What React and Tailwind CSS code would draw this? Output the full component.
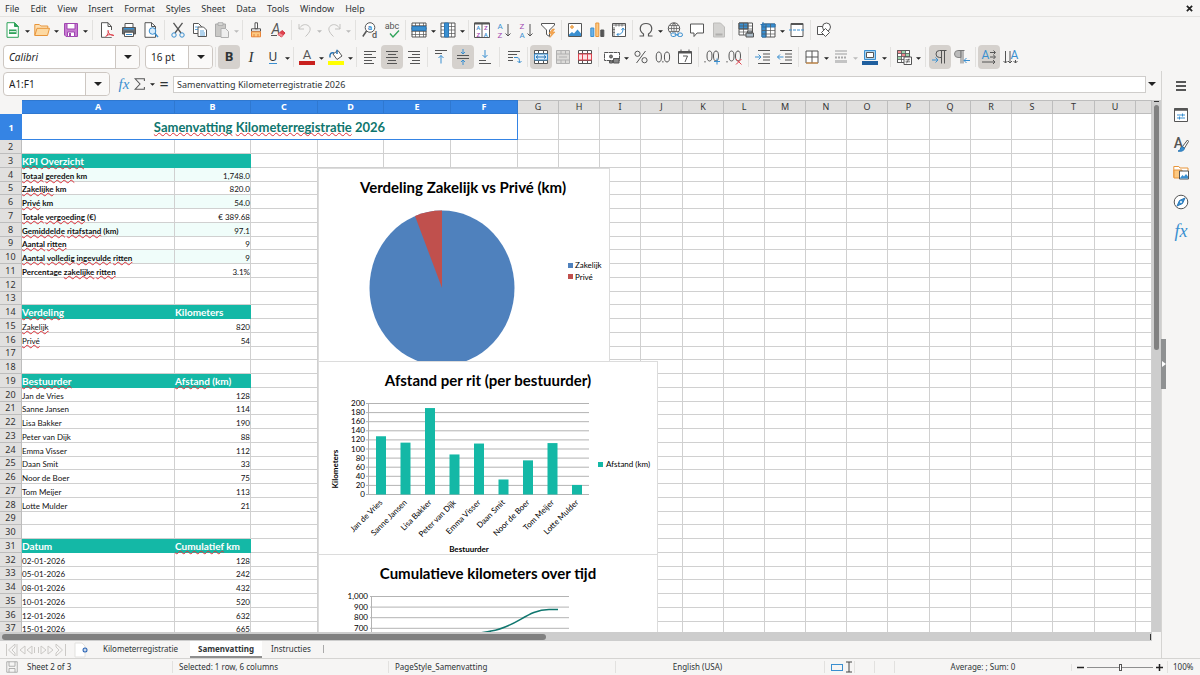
import { useState } from "react";

const INK = "#555555";
const BLUE = "#3a8fd0";
const TEAL = "#14b8a6";

const Svg = ({ children, size = "size-4", className = "" }) => (
    <svg viewBox="0 0 16 16" className={`${size} shrink-0 overflow-visible ${className}`} fill="none" stroke={INK} strokeWidth="1" aria-hidden="true">
        {children}
    </svg>
);

const Glyph = ({ x, y, size, color = INK, weight = "400", style = "normal", children }) => (
    <text x={x} y={y} fontSize={size} fill={color} stroke="none" fontWeight={weight} fontStyle={style} textAnchor="middle" fontFamily="Roboto, sans-serif">
        {children}
    </text>
);

const tableLines = "M.5 3.5h15M.5 6.5h15M.5 9.5h15M.5 12.5h15M4.5 1v14M8.5 1v14M12.5 1v14";

const icons = {
    newSheet: (
        <Svg>
            <path d="M2 .7h7.500L13.300 4.500v10.800H2z" fill="#fff" stroke="#2fa35a" />
            <path d="M9.500.7v3.800h3.800z" fill="#2fa35a" stroke="#2fa35a" />
            <path d="M4 7.500h7.500v4.500H4z" fill="#2fa35a" stroke="none" />
            <path d="M4.500 9.700h6.500" stroke="#fff" />
        </Svg>
    ),
    open: (
        <Svg>
            <path d="M.8 13.300V2.500h4.500l1.500 1.500h7v2" fill="#fde0b4" stroke="#e8953a" />
            <path d="M.8 13.500 3 6.300h12.500l-2 7.200z" fill="#fdd9a2" stroke="#e8953a" />
        </Svg>
    ),
    save: (
        <Svg>
            <path d="M1.500 1.500h13v13H3L1.500 13z" fill="#c67ad0" stroke="#a046b0" />
            <path d="M4 1.500h8v5.500H4z" fill="#fff" stroke="#a046b0" />
            <path d="M4.500 10h7v4.500h-7z" fill="#fff" stroke="#a046b0" />
            <path d="M6 11h2v3H6z" fill="#a046b0" stroke="none" />
        </Svg>
    ),
    pdf: (
        <Svg>
            <path d="M2.500.7H9l3.500 3.800v10.800h-10z" fill="#fff" />
            <path d="M9 .7v3.800h3.500" />
            <path d="M8 8h5v7H6z" fill="#f6f5f4" stroke="none" />
            <path d="M9 8c1 3-.5 5-2.500 7M9 9.500c.8 2.500 3 4 6 4M7.500 13.500c2.500-1.200 5-1 7-.3" stroke="#e0434f" />
        </Svg>
    ),
    print: (
        <Svg>
            <path d="M4 1.500h8v4H4zM3.500 10h9v4.500h-9z" fill="#fff" />
            <path d="M1.500 5.500h13V12h-2v-2h-9v2h-2z" fill="#6a7074" />
            <path d="M3 6h10v1.500H3z" fill={BLUE} stroke="none" />
            <path d="M5 12.500h6" stroke={BLUE} />
        </Svg>
    ),
    preview: (
        <Svg>
            <path d="M2 .7h6.500L12.500 4.500v10.800H2z" fill="#fff" />
            <path d="M8.500.7v3.800h4" />
            <circle cx="9.500" cy="9" r="3.300" fill="#d9ecfb" stroke={BLUE} />
            <path d="m12 11.500 3 3.500" stroke={BLUE} strokeWidth="1.500" />
        </Svg>
    ),
    cut: (
        <Svg>
            <path d="M3.500.8 11 11M12.500.8 5 11" strokeWidth="1.300" />
            <circle cx="4" cy="13" r="2.200" stroke={BLUE} />
            <circle cx="12" cy="13" r="2.200" stroke={BLUE} />
        </Svg>
    ),
    copy: (
        <Svg>
            <path d="M1.500 1.500h5l3 3v7h-8z" fill="#fff" />
            <path d="M6 5h5.500l3 3v6.500H6z" fill="#fff" />
            <path d="M3 5h3M3 7.500h3M8 9h4M8 11h5M8 13h5" stroke={BLUE} strokeWidth=".8" />
        </Svg>
    ),
    paste: (
        <Svg>
            <path d="M1.500 2h10v12.500h-10z" fill="#c9c8c6" stroke="#aaa" />
            <path d="M4 .8h5v2.500H4z" fill="#e2e1df" stroke="#aaa" />
            <path d="M7 6.500h4.500l3 3v6H7z" fill="#eee" stroke="#b0b0b0" />
        </Svg>
    ),
    clone: (
        <Svg>
            <path d="M7 .8h2.500v6H7zM3.500 6.800h9v2.500h-9z" fill="#fff" />
            <path d="M3.500 9.800h9v5h-9z" fill="#fdc982" stroke="#e8853a" />
            <path d="M6 12v3M10 12v3" stroke="#e8853a" />
        </Svg>
    ),
    clearFormat: (
        <Svg>
            <Glyph x={6} y={12} size={14} style="italic">A</Glyph>
            <path d="M1 13.500h6" />
            <path d="m8 12.500 4-4 3 2.500-3.500 4z" fill="#e0434f" stroke="#d0303c" />
            <path d="m8 12.500 1.500-1.500 3.500 2-1.500 2z" fill="#f08a92" stroke="none" />
        </Svg>
    ),
    undo: (
        <Svg>
            <path d="M2 2v5h5M2 7c2-4 6-5.500 9-3.500 4 2.500 2 7-2.500 11" stroke="#c4c3c1" />
        </Svg>
    ),
    redo: (
        <Svg>
            <path d="M14 2v5H9M14 7C12 3 8 1.500 5 3.500 1 6 3 10.500 7.500 14.500" stroke="#c4c3c1" />
        </Svg>
    ),
    find: (
        <Svg>
            <circle cx="8" cy="5.500" r="4.800" fill="#fff" />
            <path d="M4.500 9 .8 14.500" strokeWidth="1.500" />
            <Glyph x={8} y={8} size={8} color={BLUE} weight="700">a</Glyph>
            <Glyph x={12.500} y={15.500} size={9} weight="500">d</Glyph>
        </Svg>
    ),
    spelling: (
        <Svg>
            <Glyph x={8} y={7} size={9}>abc</Glyph>
            <path d="m6 11.500 3 3.500 6-6.500" stroke="#2fa35a" strokeWidth="1.300" />
        </Svg>
    ),
    rows: (
        <Svg>
            <path d="M1 1h14v14H1z" fill="#fff" />
            <path d={tableLines} strokeWidth=".7" />
            <path d="M1 4.500h14v4H1z" fill={BLUE} stroke="#2a76b5" />
        </Svg>
    ),
    columns: (
        <Svg>
            <path d="M1 1h14v14H1z" fill="#fff" />
            <path d="M1 4.500h14M1 8h14M1 11.500h14M4.500 1v14M8 1v14M11.500 1v14" strokeWidth=".7" />
            <path d="M4.500 1h4v14h-4z" fill={BLUE} stroke="#2a76b5" />
        </Svg>
    ),
    sort: (
        <Svg>
            <path d="M.5 1h15v14.500H.5zM8 1v14.500" fill="#fff" />
            <path d="M.5 1.500h15" strokeWidth="2" />
            <Glyph x={4.300} y={8} size={6} color={BLUE} weight="500">A</Glyph>
            <Glyph x={4.300} y={15} size={6} color="#a046b0" weight="500">Z</Glyph>
            <Glyph x={11.800} y={8} size={6} color="#a046b0" weight="500">Z</Glyph>
            <Glyph x={11.800} y={15} size={6} color={BLUE} weight="500">A</Glyph>
        </Svg>
    ),
    sortAsc: (
        <Svg>
            <Glyph x={4} y={6.500} size={8} color={BLUE}>A</Glyph>
            <Glyph x={4} y={16} size={8} color="#a046b0">Z</Glyph>
            <path d="M12 2v12M9.500 11.500 12 14l2.500-2.500" />
        </Svg>
    ),
    sortDesc: (
        <Svg>
            <Glyph x={4} y={6.500} size={8} color="#a046b0">Z</Glyph>
            <Glyph x={4} y={16} size={8} color={BLUE}>A</Glyph>
            <path d="M12 2v12M9.500 11.500 12 14l2.500-2.500" />
        </Svg>
    ),
    filter: (
        <Svg>
            <path d="M1.500 1.500h13V3L9.500 8v6.500l-3-2V8l-5-5z" fill="#fff" />
            <path d="M12.500 7 9 11.500h2.500L10 15.500l5-5.500h-2.500L14.500 7z" fill="#f6a552" stroke="#e8953a" strokeWidth=".6" />
        </Svg>
    ),
    image: (
        <Svg>
            <path d="M1.500 1.500h13v13h-13z" fill="#fff" />
            <circle cx="5" cy="5" r="1.300" fill="#fdc982" stroke="#e8953a" />
            <path d="M2 12.500 5 10l2 1.500L10.500 7.500l3.500 4V14H2z" fill={BLUE} stroke="none" />
        </Svg>
    ),
    chart: (
        <Svg>
            <path d="M1.800 6h3v8.500h-3z" fill="#6ab2e8" stroke={BLUE} />
            <path d="M6.800 1h3v13.500h-3z" fill="#fdc982" stroke="#e8953a" />
            <path d="M11.800 8h3v6.500h-3z" fill="#555" />
        </Svg>
    ),
    pivot: (
        <Svg>
            <path d="M1.500 1.500h13v13h-13z" fill="#fff" />
            <path d="M2 3h12M3 5v9M5 2v2.500M8 2v2.500M11 2v2.500M2 7.500h2M2 10.500h2" stroke="#777" />
            <path d="M6 12.500c4.500 0 6-2 6-6M10.500 8 12 6l1.500 2M7.500 11 6 12.500 7.500 14" stroke={BLUE} />
        </Svg>
    ),
    symbol: (
        <Svg>
            <path d="M1.500 14h4v-2C0 8 2 1.500 8 1.500S16 8 10.500 12v2h4" strokeWidth="1.200" />
        </Svg>
    ),
    link: (
        <Svg>
            <circle cx="7" cy="6.500" r="5.700" />
            <path d="M1.500 6.500h11M7 1v11M2.500 3.500h9M2.500 9.500h9M7 1C3.500 4 3.500 9 7 12M7 1c3.500 3 3.500 8 0 11" strokeWidth=".7" />
            <path d="M4 10.500h12V15H4z" fill="#f6f5f4" stroke="none" />
            <rect x="4" y="11" width="5" height="3.500" rx="1.700" stroke={BLUE} />
            <rect x="10.500" y="11" width="5" height="3.500" rx="1.700" stroke={BLUE} />
            <path d="M7.500 12.800h4.500" stroke={BLUE} />
        </Svg>
    ),
    comment: (
        <Svg>
            <path d="M1.500 2h13v9H8l-3 3.500V11H1.500z" fill="#fff" />
        </Svg>
    ),
    header: (
        <Svg>
            <path d="M2.500 1h7l4 4v10h-11z" fill="#d4d3d1" stroke="#bdbcba" />
            <path d="M4.500 11.500h7v2h-7z" fill="#b0afad" stroke="none" />
        </Svg>
    ),
    printArea: (
        <Svg>
            <path d="M1 1h13.500v12H1z" fill="#fff" />
            <path d="M1 1h9v6H1z" fill={BLUE} />
            <path d="M1 4h13.500M1 7h13.500M1 10h13.500M5.500 1v12M10 1v12" strokeWidth=".7" />
            <path d="M8 11h7.500v4H8zM9.500 9h4.500v2H9.500z" fill="#a9bac6" />
        </Svg>
    ),
    freeze: (
        <Svg>
            <path d="M2 2h13v13H2z" fill="#fff" />
            <path d="M2 2h13v3H2zM2 5h4v10H2z" fill={BLUE} stroke="#2a76b5" />
            <path d="M2 8.500h13M2 12h13M6 2v13M10.500 2v13" strokeWidth=".7" />
            <path d="M3 0v5M.5 2.500h5" stroke="#2a76b5" />
        </Svg>
    ),
    split: (
        <Svg>
            <path d="M2 1.500h12v13H2z" fill="#fff" />
            <path d="M2 2h12" strokeWidth="2" />
            <path d="M0 8h16" stroke={BLUE} strokeDasharray="3 1" />
        </Svg>
    ),
    shapes: (
        <Svg>
            <path d="M1.500 4.500h8v8h-8z" fill="#fff" />
            <circle cx="10.500" cy="5" r="4" fill="#fff" />
            <path d="m9.500 6.500 4 4-4 4-4-4z" fill="#fff" />
        </Svg>
    ),
    fontColor: (
        <Svg>
            <Glyph x={8} y={10} size={13}>A</Glyph>
            <path d="M0 12h16v4H0z" fill="#c9211e" stroke="none" />
        </Svg>
    ),
    highlight: (
        <Svg>
            <path d="m5 5 5-3.500 4 5.500-5 3.500z" fill="#fff" />
            <path d="M9 5V.8M2 8.500C1.500 5 3 3 6 4" stroke="#2a76b5" strokeWidth="1.500" />
            <path d="M0 12h16v4H0z" fill="#ff0" stroke="none" />
        </Svg>
    ),
    left: <Svg><path d="M2 2.500h12M2 5.500h8M2 8.500h12M2 11.500h8M2 14.500h10" /></Svg>,
    center: <Svg><path d="M2 2.500h12M4 5.500h8M2 8.500h12M4 11.500h8M3 14.500h10" /></Svg>,
    right: <Svg><path d="M2 2.500h12M6 5.500h8M2 8.500h12M6 11.500h8M4 14.500h10" /></Svg>,
    top: (
        <Svg>
            <path d="M2 1.500h12M2 4.500h7" />
            <path d="M8 14.500V6.500M5.500 9 8 6.500 10.500 9" stroke={BLUE} />
        </Svg>
    ),
    middle: (
        <Svg>
            <path d="M2 6.500h12M2 9.500h12" />
            <path d="M8 0v5M6 3l2 2 2-2M8 16v-5M6 13l2-2 2 2" stroke={BLUE} />
        </Svg>
    ),
    bottom: (
        <Svg>
            <path d="M2 11.500h7M2 14.500h12" />
            <path d="M8 1v7.500M5.500 6 8 8.500 10.500 6" stroke={BLUE} />
        </Svg>
    ),
    wrap: (
        <Svg>
            <path d="M2 2.500h12M2 5.500h9M2 8.500h5M2 11.500h5" />
            <path d="M8 8.500h3c2 0 2.500 1.500 2.500 5M11.500 12l2 2 2-2" stroke={BLUE} />
        </Svg>
    ),
    merge: (
        <Svg>
            <path d="M1.500 1.500h13v13h-13z" fill="#fff" />
            <path d="M1.500 4.500h13M1.500 11.500h13M5.500 1.500v13M10.500 1.500v13" />
            <path d="M1.500 5h13v6h-13z" fill="#d9ecfb" stroke={BLUE} />
            <path d="M3 8h10M5 6.500 3 8l2 1.500M11 6.500 13 8l-2 1.500" stroke="#2a76b5" />
        </Svg>
    ),
    unmerge: (
        <Svg>
            <path d="M1.500 1.500h13v13h-13z" fill="#dcdbd9" stroke="#b0b0b0" />
            <path d="M1.500 5h13M1.500 11h13M6 1.500V5M10.500 1.500V5M6 11v3.500M10.500 11v3.500M4 8h8" stroke="#b0b0b0" />
        </Svg>
    ),
    splitCells: (
        <Svg>
            <path d="M1.500 1.500h13v13h-13z" fill="#fff" />
            <path d="M1.500 4.500h13M1.500 11.500h13M5.500 1.500v13M10.500 1.500v13" />
            <path d="M1.500 5h13v6h-13zM5.500 5v6M10.500 5v6" fill="#fbe3e4" stroke="#e0434f" />
        </Svg>
    ),
    currency: (
        <Svg>
            <path d="M.5 3.500h15v8H.5z" fill="#fff" strokeDasharray="4 .5" />
            <circle cx="7" cy="7.500" r="1.500" fill="#777" />
            <path d="M9.500 9.500h5.500V14H9.500zM5.500 12h3v2h-3z" fill="#888" />
        </Svg>
    ),
    percent: (
        <Svg>
            <circle cx="4.500" cy="4.800" r="2.600" />
            <circle cx="11.500" cy="11.200" r="2.600" />
            <path d="m12.500 2-9 12" />
        </Svg>
    ),
    number: (
        <Svg>
            <ellipse cx="3.800" cy="8" rx="2.600" ry="5" />
            <ellipse cx="12" cy="8" rx="2.600" ry="5" />
            <path d="M7.900 12v1.500" />
        </Svg>
    ),
    date: (
        <Svg>
            <path d="M1.500 2.500h13v12h-13z" fill="#fff" />
            <path d="M1.500 3.500h13" strokeWidth="2" />
            <path d="M4 .5v3M12 .5v3M6 7h4.500L8 13" />
        </Svg>
    ),
    addDecimal: (
        <Svg>
            <path d="M1 12v1.500" />
            <ellipse cx="5.500" cy="7" rx="2.500" ry="5" />
            <ellipse cx="12" cy="7" rx="2.500" ry="5" />
            <path d="M10 12.500h6M13 9.500v6" stroke={BLUE} />
        </Svg>
    ),
    deleteDecimal: (
        <Svg>
            <path d="M1 12v1.500" />
            <ellipse cx="5.500" cy="7" rx="2.500" ry="5" />
            <ellipse cx="12" cy="7" rx="2.500" ry="5" />
            <path d="m10 10 5.500 5.500M15.500 10 10 15.500" stroke="#e0434f" />
        </Svg>
    ),
    indent: (
        <Svg>
            <path d="M3 1.500h12M8 5h7M8 8h7M8 11h7M3 14.500h12" />
            <path d="M0 8h6M3.500 5.500 6 8l-2.500 2.500" stroke={BLUE} />
        </Svg>
    ),
    outdent: (
        <Svg>
            <path d="M3 1.500h12M8 5h7M8 8h7M8 11h7M3 14.500h12" />
            <path d="M.5 8h6M3 5.500.5 8 3 10.500" stroke={BLUE} />
        </Svg>
    ),
    borders: (
        <Svg>
            <path d="M2 2h12v12H2zM8 2v12M2 8h12" fill="#fff" />
            <path d="M2 14h12" stroke="#e8953a" />
        </Svg>
    ),
    borderStyle: (
        <Svg>
            <path d="M2 2h12M2 5h12" stroke="#bbb" strokeWidth="1.500" />
            <path d="M2 8.500h12" stroke="#aaa" strokeWidth="2" strokeDasharray="2 1" />
            <path d="M2 12.500h12" stroke="#c4c4c4" strokeWidth="3" />
        </Svg>
    ),
    borderColor: (
        <Svg>
            <path d="M2.500 1.500h11v9h-11z" fill="#a8d2f0" stroke={BLUE} />
            <path d="M4.500 3.500h7v5h-7z" fill="#fff" />
            <path d="M0 12h16v4H0z" fill="#1f5f9e" stroke="none" />
        </Svg>
    ),
    conditional: (
        <Svg>
            <path d="M1.500 1.500h12v12h-12z" fill="#fff" />
            <path d="M1.500 1.500h4v3h-4zM5.500 4.500h4v3h-4z" fill="#ee8a90" stroke="none" />
            <path d="M5.500 1.500h4v3h-4zM9.500 4.500h4v3h-4zM1.500 7.500h4v3h-4z" fill="#9ed6af" stroke="none" />
            <path d="M1.500 1.500h12v12h-12zM1.500 4.500h12M1.500 7.500h12M1.500 10.500h12M5.500 1.500v12M9.500 1.500v12" strokeWidth=".8" />
            <path d="M8 8h7.500v7.500H8z" fill="#fff" />
            <path d="M9.500 10.800h4.500M9.500 12.800h4.500M13 9.500l-2.500 4.800" strokeWidth=".8" />
        </Svg>
    ),
    ltr: (
        <Svg>
            <path d="M14.500 1.500h-7a3.500 3.500 0 0 0 0 7h1.500M9.500 1.500v13M12.500 1.500v13" />
            <path d="M0 11h6M3.500 8.500 6 11l-2.500 2.500" stroke={BLUE} />
        </Svg>
    ),
    rtl: (
        <Svg>
            <path d="M7 1.500H4a3 3 0 0 0 0 7h3z" fill="#bbb" stroke="#888" />
            <path d="M10.500 1.500h-6M7 1.500v13M9 1.500v13" stroke="#777" />
            <path d="M10 11.500h6M12.500 9 10 11.500l2.500 2.500" stroke={BLUE} />
        </Svg>
    ),
    textHorizontal: (
        <Svg>
            <Glyph x={4.500} y={9.500} size={12} color={BLUE}>A</Glyph>
            <path d="M9 3.500h5M12.500 1.500l2 2-2 2M9 8h5M12.500 6l2 2-2 2M1 13h13M12 11l2 2-2 2" />
        </Svg>
    ),
    textVertical: (
        <Svg>
            <Glyph x={11.500} y={9.500} size={12} color={BLUE}>A</Glyph>
            <path d="M2.500 2v12M.5 12l2 2 2-2M7 2v12M5 12l2 2 2-2M12.500 11v3M10.500 12l2 2 2-2" />
        </Svg>
    ),
    sum: (
        <Svg size="size-[14px]">
            <path d="M13 4.500V2H2.500L8 8l-5.500 6H13v-2.500" strokeWidth="1.200" />
        </Svg>
    ),
    menu: <Svg><path d="M3 4h10M3 8h10M3 12h10" stroke="#222" strokeWidth="1.500" /></Svg>,
    properties: (
        <Svg>
            <path d="M1.500 1.500h13v13h-13z" fill="#fff" />
            <path d="M1.500 2.500h13" strokeWidth="2.500" />
            <path d="M4 8h8M4 11h8M9.500 6.500v3M6.500 9.500v3" stroke={BLUE} />
        </Svg>
    ),
    styles: (
        <Svg>
            <Glyph x={5.500} y={11.500} size={14} weight="500">A</Glyph>
            <path d="m14.500 4-5 6.500 2 1.500 4-6.500z" fill="#fff" />
            <path d="M5 15c3 0 1.500-3 4-4.500l2.500 1.700C11.500 14.500 8 16 5 15z" fill={BLUE} stroke="#2a76b5" />
        </Svg>
    ),
    gallery: (
        <Svg>
            <path d="M.8 12.500v-11h5L7 3h8v3" fill="#fff" stroke="#e8953a" />
            <path d="M1 5h8v8H1z" fill="#fdc982" stroke="#e8953a" />
            <path d="M6.500 6h9v8h-9z" fill="#fff" />
            <path d="m7 13 2.500-3 1.500 1.500 2-2.500 2 2.500v2H7z" fill={BLUE} stroke="none" />
        </Svg>
    ),
    navigator: (
        <Svg>
            <circle cx="8" cy="8" r="6.800" fill="#fff" />
            <path d="m12 4-2.500 5.500L4 12l2.500-5.500z" fill={BLUE} stroke="#2a76b5" />
            <circle cx="8" cy="8" r="1" fill="#fff" stroke="none" />
        </Svg>
    ),
};

const menus = ["File", "Edit", "View", "Insert", "Format", "Styles", "Sheet", "Data", "Tools", "Window", "Help"];

const standardBar = [
    { id: "newSheet", drop: true }, { id: "open", drop: true }, { id: "save", drop: true }, "wide",
    { id: "pdf" }, { id: "print" }, { id: "preview" }, "thin",
    { id: "cut" }, { id: "copy" }, { id: "paste", drop: true, dim: true }, "thin",
    { id: "clone" }, { id: "clearFormat" }, "thin",
    { id: "undo", drop: true, dim: true }, { id: "redo", drop: true, dim: true }, "wide",
    { id: "find" }, { id: "spelling" }, "thin",
    { id: "rows", drop: true }, { id: "columns", drop: true }, "thin",
    { id: "sort" }, { id: "sortAsc" }, { id: "sortDesc" }, { id: "filter" }, "thin",
    { id: "image" }, { id: "chart" }, { id: "pivot" }, "thin",
    { id: "symbol", drop: true }, { id: "link" }, { id: "comment" }, { id: "header", dim: true }, "thin",
    { id: "printArea" }, { id: "freeze", drop: true }, { id: "split" }, "thin",
    { id: "shapes" },
];

const formatBar = [
    { id: "fontColor", drop: true }, { id: "highlight", drop: true }, "thin",
    { id: "left" }, { id: "center", active: true }, { id: "right" }, "thin",
    { id: "top" }, { id: "middle", active: true }, { id: "bottom" }, "wide",
    { id: "wrap" }, "thin",
    { id: "merge", active: true }, { id: "unmerge", dim: true }, { id: "splitCells" }, "thin",
    { id: "currency", drop: true }, { id: "percent" }, { id: "number" }, { id: "date" }, "thin",
    { id: "addDecimal" }, { id: "deleteDecimal" }, "wide",
    { id: "indent" }, { id: "outdent" }, "thin",
    { id: "borders", drop: true }, { id: "borderStyle", drop: true, dim: true }, { id: "borderColor", drop: true }, "thin",
    { id: "conditional", drop: true }, "wide",
    { id: "ltr", active: true }, { id: "rtl" }, "thin",
    { id: "textHorizontal", active: true }, { id: "textVertical" },
];

const Caret = ({ dim, big }) => (
    <svg viewBox="0 0 8 4" className={big ? "w-2 h-1" : "w-[5px] h-[3px]"} aria-hidden="true">
        <path d="M0 0h8L4 4z" fill={dim ? "#bbb" : "#222"} />
    </svg>
);

const Separator = ({ kind }) => (
    <div className={`flex justify-center shrink-0 ${kind === "wide" ? "w-[7px]" : "w-[5px]"}`}>
        <div className="w-px h-5 bg-[#e2e1df]" />
    </div>
);

const ToolButton = ({ label, active, children }) => (
    <button type="button" aria-label={label} aria-pressed={active} className={`flex items-center justify-center w-[22px] h-6 shrink-0 rounded-sm ${active ? "bg-[#d5d1cd]" : ""}`}>
        {children}
    </button>
);

const Tools = ({ items }) =>
    items.map((item, i) =>
        typeof item === "string" ? (
            <Separator key={i} kind={item} />
        ) : (
            <div key={i} className="flex shrink-0">
                <ToolButton label={item.id} active={item.active}>{icons[item.id]}</ToolButton>
                {item.drop && (
                    <button type="button" aria-label={`${item.id} options`} className="flex items-center justify-center w-[7px] pt-[2px]">
                        <Caret dim={item.dim} />
                    </button>
                )}
            </div>
        )
    );

const Combo = ({ label, value, width, italic }) => (
    <div className={`flex h-6 shrink-0 bg-white border border-[#cdc7c2] rounded ${width}`}>
        <input aria-label={label} defaultValue={value} className={`min-w-0 flex-1 px-[5px] text-[10px] text-[#1e1e1e] bg-transparent outline-none ${italic ? "italic" : ""}`} />
        <button type="button" aria-label={`${label} list`} className="flex items-center justify-center w-6 border-l border-[#cdc7c2] bg-[#faf9f8] rounded-r">
            <Caret big />
        </button>
    </div>
);

const columns = [
    ["A", "w-[153px]"], ["B", "w-[76px]"], ["C", "w-[67px]"], ["D", "w-[66px]"], ["E", "w-[67px]"], ["F", "w-[67px]"],
    ["G", "w-[41px]"], ["H", "w-[41px]"], ["I", "w-[41px]"], ["J", "w-[42px]"], ["K", "w-[41px]"], ["L", "w-[41px]"],
    ["M", "w-[41px]"], ["N", "w-[41px]"], ["O", "w-[41px]"], ["P", "w-[42px]"], ["Q", "w-[41px]"], ["R", "w-[41px]"],
    ["S", "w-[41px]"], ["T", "w-[42px]"], ["U", "w-[41px]"], ["", ""],
];

// words wrapped in underscores are flagged by the spell checker
const sheet = {
    3: { head: true, a: "_KPI_ _Overzicht_", b: "" },
    4: { bold: true, band: true, a: "_Totaal_ _gereden_ km", b: "1,748.0" },
    5: { bold: true, a: "_Zakelijke_ km", b: "820.0" },
    6: { bold: true, band: true, a: "_Privé_ km", b: "54.0" },
    7: { bold: true, a: "_Totale_ _vergoeding_ (€)", b: "€ 389.68" },
    8: { bold: true, band: true, a: "_Gemiddelde_ _ritafstand_ (km)", b: "97.1" },
    9: { bold: true, a: "_Aantal_ _ritten_", b: "9" },
    10: { bold: true, band: true, a: "_Aantal_ _volledig_ _ingevulde_ _ritten_", b: "9" },
    11: { bold: true, a: "Percentage _zakelijke_ _ritten_", b: "3.1%" },
    14: { head: true, a: "_Verdeling_", b: "Kilometers" },
    15: { a: "_Zakelijk_", b: "820" },
    16: { a: "_Privé_", b: "54" },
    19: { head: true, a: "_Bestuurder_", b: "_Afstand_ (km)" },
    20: { a: "Jan de Vries", b: "128" },
    21: { a: "Sanne Jansen", b: "114" },
    22: { a: "Lisa Bakker", b: "190" },
    23: { a: "Peter van Dijk", b: "88" },
    24: { a: "Emma Visser", b: "112" },
    25: { a: "Daan Smit", b: "33" },
    26: { a: "Noor de Boer", b: "75" },
    27: { a: "Tom Meijer", b: "113" },
    28: { a: "Lotte Mulder", b: "21" },
    31: { head: true, a: "Datum", b: "_Cumulatief_ km" },
    32: { a: "02-01-2026", b: "128" },
    33: { a: "05-01-2026", b: "242" },
    34: { a: "08-01-2026", b: "432" },
    35: { a: "10-01-2026", b: "520" },
    36: { a: "12-01-2026", b: "632" },
    37: { a: "15-01-2026", b: "665" },
};

const Spelled = ({ text }) =>
    text.split("_").map((part, i) =>
        i % 2 ? (
            <span key={i} className="underline decoration-wavy decoration-[#e0303a] decoration-1 underline-offset-0 [text-decoration-skip-ink:none]">{part}</span>
        ) : (
            part
        )
    );

const rows = Array.from({ length: 36 }, (_, i) => i + 2);
const line = "border-r border-b border-[#d0d0d0]";

function Grid() {
    return (
        <table className="table-fixed w-full border-separate border-spacing-0 font-[Lato,sans-serif] text-[8px] leading-[13px] text-[#111]">
            <colgroup>
                <col className="w-[22px]" />
                {columns.map(([name, width], i) => <col key={i} className={width} />)}
            </colgroup>
            <thead className="font-['Noto_Sans',sans-serif] text-[9px]">
                <tr className="h-[14px]">
                    <th className="p-0 bg-[#f6f5f4]" />
                    {columns.map(([name], i) => (
                        <th key={i} scope="col" className={`p-0 border-r border-b border-t ${i < 6 ? "bg-[#3584e4] border-[#2f78d0] text-white font-bold" : "bg-[#e1e0df] border-[#bdbdbd] text-[#333] font-normal"}`}>
                            <div className="h-3 leading-3">{name}</div>
                        </th>
                    ))}
                </tr>
            </thead>
            <tbody>
                <tr className="h-[26px]">
                    <th scope="row" className="p-0 bg-[#3584e4] text-white text-[9px] font-bold font-['Noto_Sans',sans-serif]">1</th>
                    <td colSpan={6} className="p-0 text-center text-[13px] leading-5 font-bold text-[#0f766e] border-r border-b border-[#3584e4]">
                        <Spelled text="_Samenvatting_ _Kilometerregistratie_ 2026" />
                    </td>
                    {columns.slice(6).map((c, i) => <td key={i} className={line} />)}
                </tr>
                {rows.map((n) => {
                    const row = sheet[n];
                    const short = n % 4 === 1;
                    const leading = row?.head ? "leading-[14px]" : short ? "leading-[15px]" : "leading-4";
                    const inner = `whitespace-nowrap ${leading} ${short ? "h-3" : "h-[13px]"}`;
                    const fill = row?.head ? "bg-[#14b8a6] text-white font-bold border-[#14b8a6] border-r border-b text-[10px]" : `${line} ${row?.band ? "bg-[#f0fdfa]" : ""}`;
                    return (
                        <tr key={n} className={short ? "h-[13px]" : "h-[14px]"}>
                            <th scope="row" className="p-0 bg-[#e1e0df] border-r border-b border-[#bdbdbd] text-[#333] text-[9px] font-normal font-['Noto_Sans',sans-serif]">
                                <div className={short ? "h-3 leading-3" : "h-[13px] leading-[13px]"}>{n}</div>
                            </th>
                            <td className={`p-0 ${fill} ${row?.bold ? "font-bold" : ""}`}>
                                {row && <div className={inner}><Spelled text={row.a} /></div>}
                            </td>
                            <td className={`p-0 ${fill} ${row?.head ? "" : "text-right"}`}>
                                {row && <div className={inner}><Spelled text={row.b} /></div>}
                            </td>
                            {columns.slice(2).map((c, i) => <td key={i} className={line} />)}
                        </tr>
                    );
                })}
            </tbody>
        </table>
    );
}

const ChartTitle = ({ x, children }) => (
    <text x={x} y="24" fontSize="15" fontWeight="700" textAnchor="middle">{children}</text>
);

const PieChart = () => (
    <svg width="292" height="193" className="block bg-white border-l border-t border-r border-[#dcdcdc]" fontFamily="Lato, sans-serif" fontSize="8">
        <ChartTitle x="144">Verdeling Zakelijk vs Privé (km)</ChartTitle>
        <ellipse cx="123" cy="119" rx="72.500" ry="77.500" fill="#4f81bd" />
        <path d="M123 119V41.500A72.500 77.500 0 0 0 96 47z" fill="#c0504d" />
        <path d="M249 94h5v5h-5z" fill="#4f81bd" />
        <path d="M249 105h5v5h-5z" fill="#c0504d" />
        <text x="256" y="99">Zakelijk</text>
        <text x="256" y="111">Privé</text>
    </svg>
);

const trips = rows.filter((n) => n >= 20 && n <= 28).map((n) => ({ name: sheet[n].a, km: Number(sheet[n].b) }));

const BarChart = () => (
    <svg width="340" height="193" className="block bg-white border-l border-t border-r border-[#dcdcdc]" fontFamily="Lato, sans-serif" fontSize="8">
        <ChartTitle x="169">Afstand per rit (per bestuurder)</ChartTitle>
        {Array.from({ length: 11 }, (_, i) => (
            <g key={i}>
                <path d={`M47 ${132.5 - i * 9.1}H270`} stroke="#b3b3b3" />
                <text x="46" y={135 - i * 9.1} textAnchor="end">{i * 20}</text>
            </g>
        ))}
        <path d="M49.500 41v92" stroke="#b3b3b3" />
        {trips.map((t, i) => (
            <g key={t.name}>
                <rect x={57 + i * 24.5} y={132.5 - t.km * 0.455} width="10" height={t.km * 0.455} fill={TEAL} />
                <text textAnchor="end" transform={`translate(${64 + i * 24.5} 141) rotate(-45)`}>{t.name}</text>
            </g>
        ))}
        <text textAnchor="middle" fontWeight="700" transform="translate(19 107) rotate(-90)">Kilometers</text>
        <text x="150" y="190" textAnchor="middle" fontWeight="700">Bestuurder</text>
        <path d="M279 100h5v5h-5z" fill={TEAL} />
        <text x="287" y="105">Afstand (km)</text>
    </svg>
);

const LineChart = () => (
    <svg width="340" height="193" className="block bg-white border-l border-t border-r border-[#dcdcdc]" fontFamily="Lato, sans-serif" fontSize="8">
        <ChartTitle x="169">Cumulatieve kilometers over tijd</ChartTitle>
        {["1,000", "900", "800", "700", "600"].map((label, i) => (
            <g key={label}>
                <path d={`M51 ${41.5 + i * 10.6}H250`} stroke="#b3b3b3" />
                <text x="49" y={44 + i * 10.6} textAnchor="end">{label}</text>
            </g>
        ))}
        <path d="M52.500 41v107" stroke="#b3b3b3" />
        <path d="M150 81c8-4 14-3 22-5 26-4 36-21.500 58-21.500h9" fill="none" stroke="#0f766e" strokeWidth="1.500" />
    </svg>
);

const tabs = ["Kilometerregistratie", "Samenvatting", "Instructies"];

export default function App() {
    const [tab, setTab] = useState("Samenvatting");
    const [zoom, setZoom] = useState(50);

    return (
        <div className="flex flex-col h-screen overflow-hidden bg-[#f6f5f4] text-[#2e3436] font-['Noto_Sans',sans-serif] text-[9px]">
            <nav className="flex items-center h-[17px] shrink-0 pl-[5px] pr-[7px] pt-px border-b border-[#e4e3e1]">
                <div className="flex flex-1 gap-[11px]">
                    {menus.map((m) => <button key={m} type="button">{m}</button>)}
                </div>
                <button type="button" aria-label="Close document">
                    <svg viewBox="0 0 8 8" className="size-[7px]"><path d="m1 1 6 6M7 1 1 7" stroke="#222" strokeWidth="2" /></svg>
                </button>
            </nav>

            <div className="flex items-center h-[27px] shrink-0 pl-[2px] pb-px">
                <Tools items={standardBar} />
            </div>

            <div className="flex items-center h-[27px] shrink-0 pl-[3px] pb-px">
                <Combo label="Font name" value="Calibri" width="w-[137px]" italic />
                <div className="w-[5px] shrink-0" />
                <Combo label="Font size" value="16 pt" width="w-[68px]" />
                <Separator kind="thin" />
                <ToolButton label="Bold" active><span className="text-[13px] font-bold">B</span></ToolButton>
                <ToolButton label="Italic"><span className="font-['Liberation_Serif',serif] text-[15px] italic">I</span></ToolButton>
                <ToolButton label="Underline"><span className="text-[12px] leading-[13px] border-b border-[#3a8fd0]">U</span></ToolButton>
                <button type="button" aria-label="Underline options" className="flex items-center justify-center w-[7px] pt-[2px]"><Caret /></button>
                <Separator kind="thin" />
                <Tools items={formatBar} />
            </div>

            <div className="flex flex-1 min-h-0">
                <main className="flex flex-col flex-1 min-w-0">
                    <div className="flex items-center h-[26px] mb-[3px] shrink-0 pl-[3px] pr-[5px]">
                        <Combo label="Name box" value="A1:F1" width="w-[107px]" />
                        <button type="button" aria-label="Function wizard" className="ml-[7px] w-[14px] font-['Liberation_Serif',serif] italic text-[15px] leading-4 text-[#3a8fd0]">fx</button>
                        <button type="button" aria-label="Select function" className="flex items-center ml-[2px] gap-[3px]">{icons.sum}<Caret /></button>
                        <button type="button" aria-label="Formula" className="w-[18px] text-[16px] leading-4">=</button>
                        <input aria-label="Input line" defaultValue="Samenvatting Kilometerregistratie 2026" className="flex-1 min-w-0 h-[17px] px-[3px] bg-white border border-[#cfcdcb] text-[9px] outline-none" />
                        <button type="button" aria-label="Expand formula bar" className="ml-[2px]"><Caret big /></button>
                    </div>

                    <div className="flex flex-1 min-h-0">
                        <div className="relative flex-1 min-w-0 overflow-hidden bg-white">
                            <Grid />
                            <div className="absolute left-[318px] top-[68px]">
                                <PieChart />
                                <BarChart />
                                <LineChart />
                            </div>
                        </div>
                        <div className="w-[9px] shrink-0 bg-[#cdcdcd] px-[2px]">
                            <div className="h-px mx-auto mt-px mb-[3px] bg-[#333]" />
                            <div className="h-[46%] rounded-full bg-[#808080]" />
                        </div>
                    </div>

                    <div className="flex items-center h-[9px] shrink-0 mr-[9px] pl-[2px] pr-px bg-[#cdcdcd]">
                        <div className="w-9/19 h-[6px] rounded-full bg-[#808080]" />
                        <div className="w-px h-[6px] ml-auto bg-[#333]" />
                    </div>

                    <div className="flex h-[17px] shrink-0 items-stretch text-[8px]">
                        <div className="flex items-center w-[62px] ml-[5px]">
                            <svg viewBox="0 0 62 12" className="w-full h-3" fill="none" stroke="#cbc9c6" aria-hidden="true">
                                <path d="M1.500 0v12M3.500 6 10 0v3L7 6l3 3v3zM12 0v12M20 2v8l-5-4zM27 2v8l-5-4zM29.500 3v6M33.500 3v6M36 2v8l5-4zM43 2v8l5-4zM57.500 6 51 0v3l3 3-3 3v3zM60.500 0v12" />
                            </svg>
                        </div>
                        <button type="button" aria-label="Add sheet" className="flex items-center justify-center w-[18px] ml-1 mr-[5px]">
                            <svg viewBox="0 0 16 16" className="size-4" fill="none">
                                <path d="M3 1h7l3 3v11H3z" fill="#fff" stroke="#e2e1df" />
                                <circle cx="13" cy="8" r="2.500" fill="#2a64b5" />
                                <path d="M13 6.500v3M11.500 8h3" stroke="#fff" />
                            </svg>
                        </button>
                        {tabs.map((name) => (
                            <button
                                key={name}
                                type="button"
                                onClick={() => setTab(name)}
                                className={`shrink-0 leading-3 border-b-2 ${tab === name ? "px-2 bg-white font-bold border-[#8f8f8f]" : "pl-[9px] pr-3 border-transparent"}`}
                            >
                                {name}
                            </button>
                        ))}
                        <div className="w-px h-2 my-1 bg-[#aaa]" />
                    </div>
                </main>

                <aside className="relative flex flex-col items-center w-[39px] shrink-0 gap-[13px] pt-[7px] border-l border-[#d5d4d2]">
                    {["menu", "properties", "styles", "gallery", "navigator"].map((id) => (
                        <button key={id} type="button" aria-label={id}>{icons[id]}</button>
                    ))}
                    <button type="button" aria-label="functions" className="font-['Liberation_Serif',serif] italic text-[18px] leading-4 text-[#3a8fd0]">fx</button>
                    <button type="button" aria-label="Hide sidebar" className="absolute -left-px top-[268px] flex items-center justify-center w-[5px] h-[50px] bg-[#8f9192]">
                        <svg viewBox="0 0 4 6" className="w-1 h-[6px]"><path d="m0 0 4 3-4 3z" fill="#fff" /></svg>
                    </button>
                </aside>
            </div>

            <footer className="flex items-center h-[17px] shrink-0 border-t border-[#d5d4d2] text-[8px] *:shrink-0">
                <Svg size="size-3" className="ml-[6px]">
                    <path d="M1 1h14v14H1zM4 1v6h8V1M4 15v-5h8v5" stroke="#999" />
                </Svg>
                <div className="w-[154px] pl-[9px]">Sheet 2 of 3</div>
                <div className="w-[216px] pl-[6px] border-l border-[#e2e1df]">Selected: 1 row, 6 columns</div>
                <div className="w-[227px] pl-[6px] border-l border-[#e2e1df]">PageStyle_Samenvatting</div>
                <div className="flex-1 pr-[45px] text-center border-l border-[#e2e1df]">English (USA)</div>
                <div className="flex items-center w-[30px] pl-[6px] gap-[3px] border-l border-[#e2e1df]">
                    <div className="w-3 h-[7px] border border-[#3a8fd0]" />
                    <svg viewBox="0 0 6 12" className="w-[6px] h-3" fill="none" stroke="#444"><path d="M0 1h6M0 11h6M3 1v10" /></svg>
                </div>
                <div className="w-5 h-3 border-l border-[#e2e1df]" />
                <div className="w-5 h-3 border-l border-[#e2e1df]" />
                <div className="w-[177px] text-center border-l border-[#e2e1df]">Average: ; Sum: 0</div>
                <div className="flex items-center w-24 pl-[5px] gap-[3px] border-l border-[#e2e1df]">
                    <button type="button" aria-label="Zoom out"><svg viewBox="0 0 7 7" className="size-[7px]"><path d="M0 3.500h7" stroke="#222" strokeWidth="1.500" /></svg></button>
                    <input
                        type="range"
                        aria-label="Zoom"
                        value={zoom}
                        onChange={(e) => setZoom(e.target.value)}
                        className="w-[66px] h-px appearance-none bg-[#8f8f8f] [&::-webkit-slider-thumb]:appearance-none [&::-webkit-slider-thumb]:w-[3px] [&::-webkit-slider-thumb]:h-[7px] [&::-webkit-slider-thumb]:border [&::-webkit-slider-thumb]:border-[#555] [&::-webkit-slider-thumb]:bg-white"
                    />
                    <button type="button" aria-label="Zoom in"><svg viewBox="0 0 7 7" className="size-[7px]"><path d="M0 3.500h7M3.500 0v7" stroke="#222" strokeWidth="1.500" /></svg></button>
                </div>
                <div className="w-[33px] pl-[5px] border-l border-[#e2e1df]">100%</div>
            </footer>
        </div>
    );
}
